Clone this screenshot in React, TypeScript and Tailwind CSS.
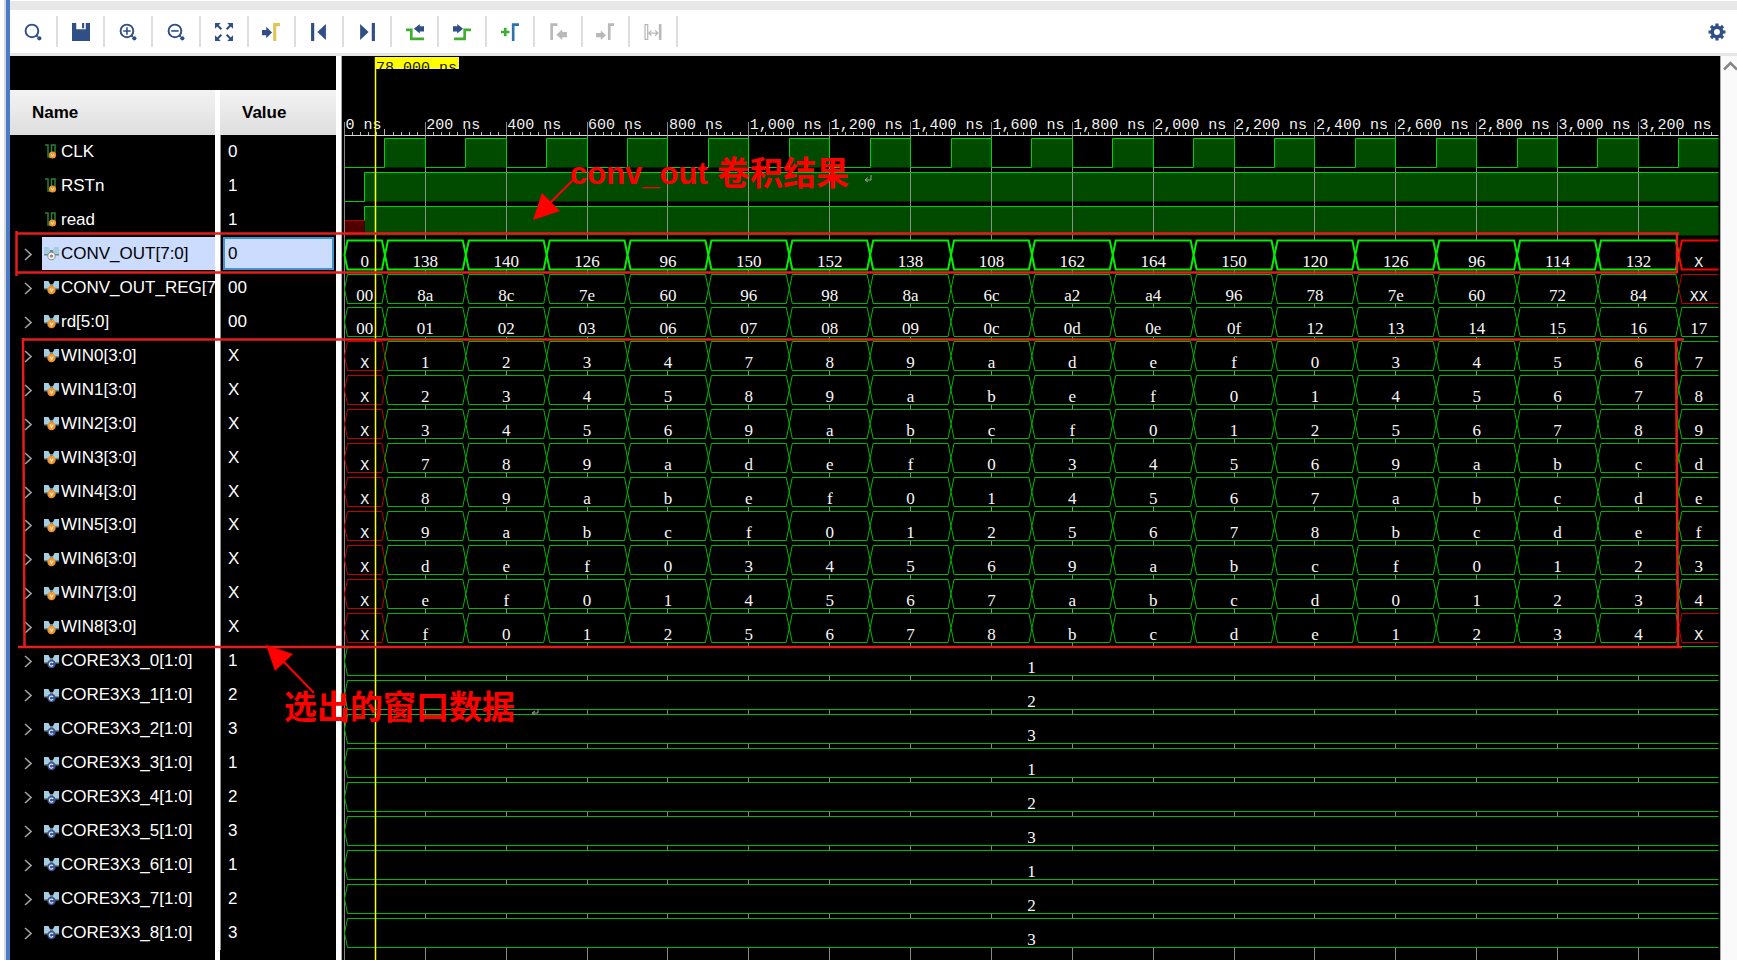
import { useState } from 'react';
import type { ReactNode } from 'react';

type SignalKind = "wire" | "bus" | "core";

interface Signal {
    name: string;
    value: string;
    kind: SignalKind;
    // first cell, then one entry per clock cycle
    data?: string[];
}

const bus = (name: string, value: string, first: string, cells: string): Signal => ({
    name,
    value,
    kind: "bus",
    data: [first, ...cells.split(" ")],
});

const SIGNALS: Signal[] = [
    { name: "CLK", value: "0", kind: "wire" },
    { name: "RSTn", value: "1", kind: "wire" },
    { name: "read", value: "1", kind: "wire" },
    bus("CONV_OUT[7:0]", "0", "0", "138 140 126 96 150 152 138 108 162 164 150 120 126 96 114 132 X"),
    bus("CONV_OUT_REG[7:0]", "00", "00", "8a 8c 7e 60 96 98 8a 6c a2 a4 96 78 7e 60 72 84 XX"),
    bus("rd[5:0]", "00", "00", "01 02 03 06 07 08 09 0c 0d 0e 0f 12 13 14 15 16 17"),
    bus("WIN0[3:0]", "X", "X", "1 2 3 4 7 8 9 a d e f 0 3 4 5 6 7"),
    bus("WIN1[3:0]", "X", "X", "2 3 4 5 8 9 a b e f 0 1 4 5 6 7 8"),
    bus("WIN2[3:0]", "X", "X", "3 4 5 6 9 a b c f 0 1 2 5 6 7 8 9"),
    bus("WIN3[3:0]", "X", "X", "7 8 9 a d e f 0 3 4 5 6 9 a b c d"),
    bus("WIN4[3:0]", "X", "X", "8 9 a b e f 0 1 4 5 6 7 a b c d e"),
    bus("WIN5[3:0]", "X", "X", "9 a b c f 0 1 2 5 6 7 8 b c d e f"),
    bus("WIN6[3:0]", "X", "X", "d e f 0 3 4 5 6 9 a b c f 0 1 2 3"),
    bus("WIN7[3:0]", "X", "X", "e f 0 1 4 5 6 7 a b c d 0 1 2 3 4"),
    bus("WIN8[3:0]", "X", "X", "f 0 1 2 5 6 7 8 b c d e 1 2 3 4 X"),
    ...[1, 2, 3, 1, 2, 3, 1, 2, 3].map((v, i): Signal => ({
        name: `CORE3X3_${i}[1:0]`,
        value: String(v),
        kind: "core",
        data: [String(v)],
    })),
];

// Wave canvas geometry
const END_NS = 3398;
const px = (ns: number) => 3.5 + ns * 0.40435;
const snap = (n: number) => Math.floor(n) + 0.5;
const rowTop = (i: number) => snap(82.4 + i * 33.9);
const WAVE_H = 29;

const SignalIcon = ({ kind, selected }: { kind: SignalKind; selected: boolean }) => {
    if (kind === "wire") {
        return (
            <svg width="15" height="15" viewBox="0 0 15 15" fill="none" className="shrink-0">
                <path d="M1 1h3v12h3.500V1H11v8" stroke="#2a8038" strokeWidth="1.500" />
                <circle cx="8.500" cy="11" r="3.600" fill="#f0962e" />
                <path d="M7.200 9.800l1.300 2.500 1.300-2.500" stroke="#ffe9c8" />
            </svg>
        );
    }
    const badge = selected ? "#8f8f8f" : kind === "core" ? "#3a5592" : "#f0962e";
    return (
        <svg width="15" height="15" viewBox="0 0 15 15" fill="none" className="shrink-0">
            <path d="M0 1h4.500l1.500 3v4H0zM15 1h-4.500L9 4v4h6z" fill="#a3cde0" />
            <path d="M0 8h15v1.500H0zM6 4h3v4H6z" fill="#75868c" />
            <circle cx="7.500" cy="10" r="4.200" fill={badge} />
            {selected ? (
                <>
                    <circle cx="7.500" cy="10" r="3.200" fill="#f4f4f4" />
                    <circle cx="7.500" cy="10" r="1.600" fill="#858585" />
                </>
            ) : kind === "core" ? (
                <path d="M9 9a2 2 0 1 0 0 2.200" stroke="#dfe7f5" strokeWidth="1.200" />
            ) : (
                <path d="M6 8.500l1.500 3 1.500-3" stroke="#ffe9c8" strokeWidth="1.200" />
            )}
        </svg>
    );
};

const NAVY = "#2f4f86";
const GREEN = "#3fae2e";
const GREY = "#b9b9b9";

const Magnifier = ({ children }: { children?: ReactNode }) => (
    <>
        <circle cx="7.500" cy="7.500" r="6" stroke={NAVY} strokeWidth="1.800" />
        <path d="M12 12l1 1" stroke={NAVY} strokeWidth="2" />
        <circle cx="14.500" cy="14.500" r="2" fill={NAVY} />
        {children}
    </>
);

const TOOLS: { label: string; icon: ReactNode }[] = [
    { label: "Search", icon: <Magnifier /> },
    {
        label: "Save",
        icon: <path d="M0 0h4v6h9V0h4v17H0V0zM9.500 0h2v5h-2z" fill={NAVY} />,
    },
    {
        label: "Zoom in",
        icon: <Magnifier><path d="M4 7.500h7M7.500 4v7" stroke={NAVY} strokeWidth="1.500" /></Magnifier>,
    },
    {
        label: "Zoom out",
        icon: <Magnifier><path d="M4 7.500h7" stroke={NAVY} strokeWidth="1.500" /></Magnifier>,
    },
    {
        label: "Zoom fit",
        icon: (
            <>
                <path d="M2 2l4 4M15 2l-4 4M2 15l4-4M15 15l-4-4" stroke={NAVY} strokeWidth="2" />
                <path d="M0 0h5.500L0 5.500zM17 0h-5.500L17 5.500zM0 17h5.500L0 11.500zM17 17h-5.500l5.500-5.500z" fill={NAVY} />
            </>
        ),
    },
    {
        label: "Go to cursor",
        icon: (
            <>
                <path d="M0 6.500h4v-3l5.500 5.500L4 14.500v-3H0z" fill={NAVY} />
                <path d="M17 1.500h-5V17" stroke="#e3c45a" strokeWidth="3" />
            </>
        ),
    },
    {
        label: "Previous transition",
        icon: <path d="M1 0h3v17H1zM15 1v15L7 8.500z" fill={NAVY} />,
    },
    {
        label: "Next transition",
        icon: <path d="M13 0h3v17h-3zM2 1v15l8-7.500z" fill={NAVY} />,
    },
    {
        label: "Previous marker",
        icon: (
            <>
                <path d="M0 6.500h5V15h12" stroke={GREEN} strokeWidth="2.500" />
                <path d="M17 3h-4V1L7.500 5.500 13 10V8h4z" fill={NAVY} />
            </>
        ),
    },
    {
        label: "Next marker",
        icon: (
            <>
                <path d="M1 15h10V6.500h6" stroke={GREEN} strokeWidth="2.500" />
                <path d="M0 3h4V1l5.500 4.500L4 10V8H0z" fill={NAVY} />
            </>
        ),
    },
    {
        label: "Add marker",
        icon: (
            <>
                <path d="M0 8.500h8M4 4.500v8" stroke={GREEN} strokeWidth="2.500" />
                <path d="M17 1.500h-5.500V17" stroke="#2c73ad" strokeWidth="2.500" />
            </>
        ),
    },
    {
        label: "Previous edge",
        icon: (
            <>
                <path d="M8 1.500H2.500V16" stroke={GREY} strokeWidth="2.500" />
                <path d="M17 8.500h-4.500v-2.500L7 11l5.500 5v-2.500H17z" fill={GREY} />
            </>
        ),
    },
    {
        label: "Next edge",
        icon: (
            <>
                <path d="M17 1.500h-4.500V16" stroke={GREY} strokeWidth="2.500" />
                <path d="M0 9.500h4.500V7l5 4.500-5 4.500v-2.500H0z" fill={GREY} />
            </>
        ),
    },
    {
        label: "Swap cursors",
        icon: (
            <>
                <path d="M1 1.500h2.500v14H1z" stroke={GREY} strokeWidth="1.200" />
                <path d="M14 1h2.500v15H14z" fill={GREY} />
                <path d="M5 9.500h7.500M7 7L4.500 9.500 7 12M10.500 7l2.500 2.500-2.500 2.500" stroke={GREY} strokeWidth="1.200" />
            </>
        ),
    },
];

const Toolbar = () => (
    <div className="flex h-[46px] items-center justify-between border-b-[3px] border-[#e6e6e6] bg-white">
        <div className="grid w-[668px] grid-cols-14">
            {TOOLS.map(({ label, icon }) => (
                <button
                    key={label}
                    aria-label={label}
                    className="flex h-[31px] items-center justify-center border-r-2 border-[#dedede]"
                >
                    <svg width="18" height="18" viewBox="0 0 17 17" fill="none">{icon}</svg>
                </button>
            ))}
        </div>
        <button aria-label="Settings" className="mr-[11px]">
            <svg width="18" height="18" viewBox="-9 -9 18 18" fill="none">
                <circle r="4.700" stroke={NAVY} strokeWidth="3.500" />
                <path d="M0-8.500V-5M0 5v3.500M-8.500 0H-5M5 0h3.500M-6-6l2.300 2.300M6 6L3.700 3.700M-6 6l2.300-2.300M6-6L3.700-3.700" stroke={NAVY} strokeWidth="3.200" />
            </svg>
        </button>
    </div>
);

interface SignalPanelProps {
    selected: number;
    setSelected: (row: number) => void;
}

const SignalPanel = ({ selected, setSelected }: SignalPanelProps) => (
    <div className="flex w-[326px] shrink-0 flex-col bg-black pt-[34px]">
        <table className="w-full table-fixed border-separate border-spacing-0 text-[17px] leading-5 text-white">
            <thead>
                <tr className="h-[45px] text-left text-black">
                    <th className="w-[210px] border-r-[5px] border-white bg-linear-to-b from-[#f3f3f4] to-[#dededf] p-0 pl-[22px]">Name</th>
                    <th className="bg-linear-to-b from-[#f3f3f4] to-[#dededf] p-0 pl-[22px]">Value</th>
                </tr>
            </thead>
        </table>
        <table className="h-[815px] w-full table-fixed border-separate border-spacing-0 text-[17px] leading-5 text-white">
            <tbody>
                {SIGNALS.map((signal, i) => {
                    const active = i === selected;
                    return (
                        <tr key={signal.name} onClick={() => setSelected(i)}>
                            <td className="w-[210px] border-r-[5px] border-white p-0">
                                <div className="flex h-[33px] items-center overflow-hidden">
                                    <div className="flex w-8 shrink-0 justify-center pl-[3px]">
                                        {signal.kind !== "wire" && (
                                            <button aria-label={`Expand ${signal.name}`}>
                                                <svg width="8" height="14" viewBox="0 0 8 14" fill="none">
                                                    <path d="M1 2l6 5.500L1 13" stroke="#a0a0a0" strokeWidth="1.600" />
                                                </svg>
                                            </button>
                                        )}
                                    </div>
                                    <div className={`flex h-full min-w-0 flex-1 items-center gap-x-[2px] pl-[2px] whitespace-nowrap ${active ? "bg-[#cbdcfe] text-black" : ""}`}>
                                        <SignalIcon kind={signal.kind} selected={active} />
                                        <span className="min-w-0 overflow-hidden">{signal.name}</span>
                                    </div>
                                </div>
                            </td>
                            <td className="border-l border-[#8c8c8c] p-0 px-[2px]">
                                <div className={`flex h-[33px] items-center border-2 pl-[3px] ${active ? "border-[#3f93d2] bg-[#cbdcfe] text-black" : "border-transparent"}`}>
                                    {signal.value}
                                </div>
                            </td>
                        </tr>
                    );
                })}
            </tbody>
        </table>
        <div className="w-[210px] flex-1 border-r-[5px] border-white" />
    </div>
);

const BusRow = ({ signal, row, selected }: { signal: Signal; row: number; selected: boolean }) => {
    const top = rowTop(row);
    const bottom = top + WAVE_H;
    const mid = top + WAVE_H / 2;
    const data = signal.data ?? [];

    return (
        <g>
            {data.map((text, i) => {
                const last = i === data.length - 1;
                const x1 = px(i === 0 ? 0 : i * 200 - 100);
                const x2 = px(last ? END_NS : i * 200 + 100);
                const unknown = text.startsWith("X");
                const stroke = unknown ? (selected ? "#ff0000" : "#c00000") : selected ? "#00f000" : "#00b800";
                const d = last
                    ? `M${x2} ${top}H${x1 + 3}L${x1} ${mid}L${x1 + 3} ${bottom}H${x2}`
                    : `M${x1} ${mid}L${x1 + 3} ${top}H${x2 - 3}L${x2} ${mid}L${x2 - 3} ${bottom}H${x1 + 3}Z`;
                return (
                    <g key={i}>
                        <path d={d} fill="#000" stroke={stroke} strokeWidth={selected ? 2 : 1} />
                        <text
                            x={(x1 + x2) / 2}
                            y={bottom - 3}
                            textAnchor="middle"
                            fill="#f8f8f8"
                            className={unknown ? "text-[15px]" : "font-['Liberation_Serif',serif] text-[17px]"}
                        >
                            {text}
                        </text>
                    </g>
                );
            })}
        </g>
    );
};

const Waveform = ({ selected }: { selected: number }) => {
    const majors = Array.from({ length: 17 }, (_, i) => i * 200);
    const minors = Array.from({ length: 170 }, (_, i) => i * 20).filter((ns) => ns % 200 !== 0);
    const end = px(END_NS);
    const clkLow = rowTop(0) + WAVE_H;

    return (
        <div className="min-w-0 flex-1 overflow-hidden border-l border-[#a8a8a8] bg-black">
            <svg width="1378" height="904" viewBox="1 0 1378 904" fill="none" className="font-['Liberation_Mono',monospace] text-[15px]">
                {/* Time ruler */}
                {minors.map((ns) => (
                    <path key={ns} d={`M${snap(px(ns))} ${ns % 100 === 0 ? 73 : 76}V79`} stroke="#b8b8b8" />
                ))}
                <path d={`M3 79.500H${end}`} stroke="#d8d8d8" />
                {majors.map((ns) => (
                    <text key={ns} x={px(ns) + 1} y="73" fill="#f2f2f2">{`${ns.toLocaleString("en-US")} ns`}</text>
                ))}

                {/* Single bit signals */}
                {Array.from({ length: 17 }, (_, i) => {
                    const x = px(i * 200 + 100);
                    const w = Math.min(px(i * 200 + 200), end) - x;
                    return <rect key={i} x={x} y={rowTop(0)} width={w} height={WAVE_H} fill="#004b00" />;
                })}
                <rect x={px(50)} y={rowTop(1)} width={end - px(50)} height={WAVE_H} fill="#004b00" />
                <rect x={px(50)} y={rowTop(2)} width={end - px(50)} height={WAVE_H} fill="#004b00" />
                <rect x={px(0)} y={rowTop(2) + 14} width={px(50) - px(0)} height={15} fill="#500000" />
                <path d={`M${px(0)} ${rowTop(2) + 14}H${px(50)}`} stroke="#b00000" />

                {majors.map((ns) => (
                    <path key={ns} d={`M${snap(px(ns))} 66V904`} stroke="#a0a0a0" strokeOpacity={0.85} />
                ))}

                <path
                    d={`M${px(0)} ${clkLow}` + Array.from({ length: 17 }, (_, i) =>
                        `H${snap(px(i * 200 + 100))}V${rowTop(0)}H${i === 16 ? end : snap(px(i * 200 + 200))}${i === 16 ? "" : `V${clkLow}`}`
                    ).join("")}
                    stroke="#00d000"
                />
                <path d={`M${px(0)} ${rowTop(1) + WAVE_H}H${snap(px(50))}V${rowTop(1)}H${end}`} stroke="#00d000" />
                <path d={`M${snap(px(50))} ${rowTop(2) + 14}V${rowTop(2)}H${end}`} stroke="#00d000" />

                {SIGNALS.map((signal, i) =>
                    signal.data && <BusRow key={signal.name} signal={signal} row={i} selected={i === selected} />
                )}

                {/* Cursor */}
                <path d="M34.500 1V904" stroke="#ffff00" strokeWidth="1.500" />
                <svg x="34" y="1" width="84" height="12">
                    <rect width="84" height="12" fill="#e8e8c0" />
                    <rect width="83" height="11" fill="#ffff00" />
                    <text x="1" y="15" fill="#202000">78.000 ns</text>
                </svg>
            </svg>
        </div>
    );
};

const Annotations = () => (
    <svg
        width="1737"
        height="960"
        fill="none"
        className="pointer-events-none absolute top-0 left-0 font-['Liberation_Sans','Noto_Sans_CJK_SC',sans-serif] font-bold"
    >
        <g stroke="#e41c1c" strokeWidth="2.500">
            <path d="M16.500 231V276M16 233.500H1679M1677 233V273M16 272.500H1677" />
            <path d="M23 338L24.500 647M22 339.500H1684M1676 340L1678 647M18 647H1682" />
        </g>
        <g fill="#ff0000">
            <path d="M573 180L550 203M314 693L284 662" stroke="#ff0000" strokeWidth="2" />
            <path d="M533 220l9-27 18 18z" />
            <path d="M266 645l27 9-18 17z" />
            <text x="570" y="184" className="text-[31px]">conv_out</text>
            <text x="717" y="185" className="text-[33px]">卷积结果</text>
            <text x="284" y="719" className="text-[33px]">选出的窗口数据</text>
        </g>
        <path d="M871 175v5h-5M868 177.500l-3 2.500 3 2M538 709v4h-5M535 711l-3 2 3 2" stroke="#a0a0a0" />
    </svg>
);

const App = () => {
    const [selected, setSelected] = useState(3);

    return (
        <div className="relative flex min-h-screen overflow-hidden bg-white pl-1 font-['Liberation_Sans',Arial,sans-serif]">
            <div className="w-[6px] shrink-0 border-l-2 border-[#d6d6d6] bg-[#4a7bc9]" />
            <div className="flex min-w-0 flex-1 flex-col pt-px">
                <div className="h-[9px] bg-[#e7e7e7]" />
                <Toolbar />
                <div className="flex flex-1">
                    <SignalPanel selected={selected} setSelected={setSelected} />
                    <div className="w-[5px] shrink-0 bg-white" />
                    <Waveform selected={selected} />
                    <div className="w-[17px] shrink-0 border-l border-[#a8a8a8] bg-[#fafafa]">
                        <button aria-label="Scroll up" className="block pt-[4px] pl-[2px]">
                            <svg width="14" height="12" viewBox="0 0 14 12" fill="none">
                                <path d="M1 9.500L7.500 3l6.500 6.500" stroke="#858585" strokeWidth="2.500" />
                            </svg>
                        </button>
                    </div>
                </div>
            </div>
            <Annotations />
        </div>
    );
};

export default App;
